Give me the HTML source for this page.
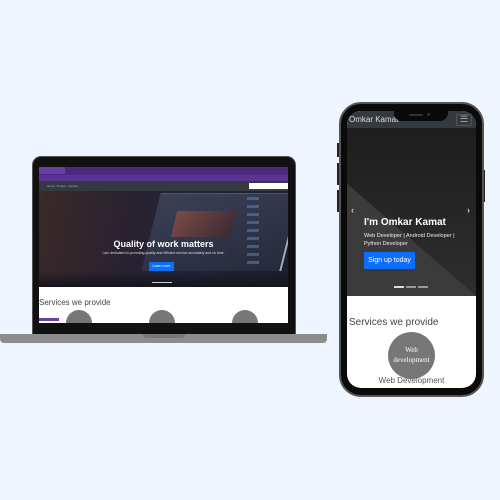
<!DOCTYPE html>
<html><head><style>
*{margin:0;padding:0;box-sizing:border-box}
body{width:500px;height:500px;background:#eef5fe;position:relative;overflow:hidden;font-family:"Liberation Sans",sans-serif}
.abs{position:absolute}
</style></head><body>
<!-- Laptop -->
<div class="abs" style="left:32px;top:156px;width:264px;height:180px;background:#111;border-radius:9px 9px 0 0;border:1px solid #555"></div>
<div class="abs" style="left:39px;top:167px;width:249px;height:156px;background:#fff;overflow:hidden">
  <div class="abs" style="left:0;top:0;width:249px;height:8px;background:#4b2a80"></div>
  <div class="abs" style="left:0;top:0;width:26px;height:7px;background:#6a3fa8"></div>
  <div class="abs" style="left:0;top:8px;width:249px;height:6px;background:#5b3395"></div>
  <div class="abs" style="left:0;top:14px;width:249px;height:10px;background:#343a40;color:#aaa;font-size:3px;line-height:10px;padding-left:8px">Home &nbsp;Project &nbsp;Contact</div>
  <div class="abs" style="left:210px;top:16px;width:39px;height:6px;background:#fff"></div>
  <div class="abs" style="left:0;top:24px;width:249px;height:96px;background:linear-gradient(100deg,#3a2a28 0%,#2a2230 35%,#1f2438 60%,#1c1f2c 100%)"></div>
  <div class="abs" style="left:112px;top:26px;width:140px;height:78px;background:linear-gradient(160deg,#3c4058,#252a3c);transform:skewX(-14deg);border-right:2px solid #aab;border-top:1px solid #556"></div>
  <div class="abs" style="left:135px;top:44px;width:60px;height:26px;background:linear-gradient(120deg,#7a4a45,#3a2a35);transform:skewX(-14deg)"></div>
  <div class="abs" style="left:208px;top:30px;width:12px;height:70px;background:repeating-linear-gradient(180deg,#5a7aa8 0 3px,transparent 3px 8px);opacity:.6"></div>
  <div class="abs" style="left:0;top:104px;width:249px;height:16px;background:linear-gradient(180deg,rgba(20,20,30,0),#15151c)"></div>
  <div class="abs" style="left:0;top:72px;width:249px;text-align:center;color:#fff;font-size:9px;font-weight:bold">Quality of work matters</div>
  <div class="abs" style="left:0;top:84px;width:249px;text-align:center;color:#ddd;font-size:3.5px">I am dedicated to providing quality and efficient service accurately and on time.</div>
  <div class="abs" style="left:110px;top:95px;width:25px;height:9px;background:#0d6efd;color:#fff;font-size:3.5px;line-height:9px;text-align:center">Learn more</div>
  <div class="abs" style="left:113px;top:115px;width:20px;height:1px;background:#ccc"></div>
  <div class="abs" style="left:0;top:131px;color:#444;font-size:8px">Services we provide</div>
  <div class="abs" style="left:0;top:151px;width:20px;height:3px;background:#6a3fa8"></div>
  <div class="abs" style="left:27px;top:143px;width:26px;height:26px;border-radius:50%;background:#777"></div>
  <div class="abs" style="left:110px;top:143px;width:26px;height:26px;border-radius:50%;background:#777"></div>
  <div class="abs" style="left:193px;top:143px;width:26px;height:26px;border-radius:50%;background:#777"></div>
</div>
<div class="abs" style="left:0;top:334px;width:327px;height:9px;background:#8c8c8c;border-radius:0 0 4px 4px"></div>
<div class="abs" style="left:143px;top:334px;width:42px;height:4px;background:#777;border-radius:0 0 4px 4px"></div>
<!-- Phone -->
<div class="abs" style="left:337px;top:143px;width:3px;height:14px;background:#222"></div>
<div class="abs" style="left:337px;top:163px;width:3px;height:22px;background:#222"></div>
<div class="abs" style="left:337px;top:190px;width:3px;height:22px;background:#222"></div>
<div class="abs" style="left:482px;top:170px;width:3px;height:32px;background:#222"></div>
<div class="abs" style="left:339px;top:102px;width:145px;height:295px;background:#0a0a0a;border-radius:22px;border:2px solid #555"></div>
<div class="abs" style="left:347px;top:111px;width:129px;height:277px;background:#fff;border-radius:14px;overflow:hidden">
  <div class="abs" style="left:0;top:0;width:129px;height:17px;background:#343a40;color:#ddd;font-size:8px;line-height:17px;padding-left:2px">Omkar Kamat</div>
  <div class="abs" style="left:109px;top:3px;width:16px;height:12px;border:1px solid #555;border-radius:2px;color:#aaa;font-size:9px;line-height:9px;text-align:center">☰</div>
  <div class="abs" style="left:0;top:17px;width:129px;height:168px;background:linear-gradient(180deg,#1e1e1e,#2e2e2e)"></div>
  <div class="abs" style="left:0;top:17px;width:129px;height:168px;background:#3b3b3b;clip-path:polygon(0 33%,100% 100%,0 100%)"></div>
  <div class="abs" style="left:4px;top:94px;color:#ccc;font-size:9px;font-weight:bold">‹</div>
  <div class="abs" style="left:120px;top:94px;color:#ccc;font-size:9px;font-weight:bold">›</div>
  <div class="abs" style="left:17px;top:106px;color:#fff;font-size:10px;font-weight:bold">I'm Omkar Kamat</div>
  <div class="abs" style="left:17px;top:121px;width:100px;color:#eee;font-size:5.5px;line-height:8px">Web Developer | Android Developer | Python Developer</div>
  <div class="abs" style="left:17px;top:141px;width:51px;height:17px;background:#0d6efd;color:#fff;font-size:7px;line-height:17px;text-align:center">Sign up today</div>
  <div class="abs" style="left:47px;top:175px;width:10px;height:2px;background:#ddd"></div>
  <div class="abs" style="left:59px;top:175px;width:10px;height:2px;background:#999"></div>
  <div class="abs" style="left:71px;top:175px;width:10px;height:2px;background:#999"></div>
  <div class="abs" style="left:2px;top:206px;color:#444;font-size:10px">Services we provide</div>
  <div class="abs" style="left:41px;top:221px;width:47px;height:47px;border-radius:50%;background:#777;color:#fff;font-family:'Liberation Serif',serif;font-size:7px;text-align:center;padding-top:13px;line-height:10px">Web<br>development</div>
  <div class="abs" style="left:0;top:265px;width:129px;text-align:center;color:#555;font-size:8px">Web Development</div>
</div>
<div class="abs" style="left:394px;top:109px;width:54px;height:12px;background:#0a0a0a;border-radius:0 0 8px 8px"></div>
<div class="abs" style="left:409px;top:114px;width:14px;height:2px;background:#333;border-radius:1px"></div>
<div class="abs" style="left:427px;top:113px;width:3px;height:3px;background:#333;border-radius:50%"></div>
</body></html>
